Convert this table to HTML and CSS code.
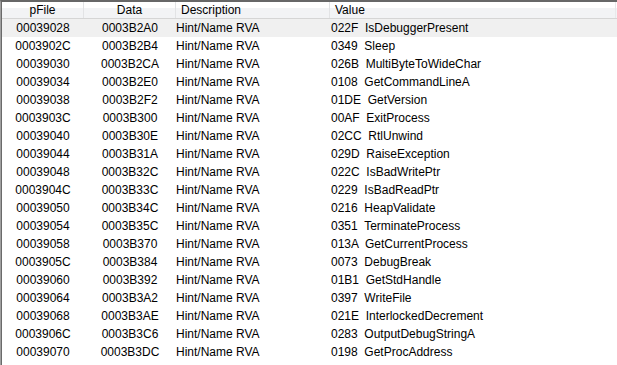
FILE: index.html
```html
<!DOCTYPE html>
<html>
<head>
<meta charset="utf-8">
<link rel="stylesheet" href="styles.css">
</head>
<body>
<div class="frame">
  <div class="list">
    <div class="header">
      <div class="hcell center">pFile</div>
      <div class="hcell center">Data</div>
      <div class="hcell">Description</div>
      <div class="hcell last">Value</div>
    </div>
    <div class="row hover"><div class="cell center">00039028</div><div class="cell center">0003B2A0</div><div class="cell">Hint/Name RVA</div><div class="cell val">022F  IsDebuggerPresent</div></div>
    <div class="row"><div class="cell center">0003902C</div><div class="cell center">0003B2B4</div><div class="cell">Hint/Name RVA</div><div class="cell val">0349  Sleep</div></div>
    <div class="row"><div class="cell center">00039030</div><div class="cell center">0003B2CA</div><div class="cell">Hint/Name RVA</div><div class="cell val">026B  MultiByteToWideChar</div></div>
    <div class="row"><div class="cell center">00039034</div><div class="cell center">0003B2E0</div><div class="cell">Hint/Name RVA</div><div class="cell val">0108  GetCommandLineA</div></div>
    <div class="row"><div class="cell center">00039038</div><div class="cell center">0003B2F2</div><div class="cell">Hint/Name RVA</div><div class="cell val">01DE  GetVersion</div></div>
    <div class="row"><div class="cell center">0003903C</div><div class="cell center">0003B300</div><div class="cell">Hint/Name RVA</div><div class="cell val">00AF  ExitProcess</div></div>
    <div class="row"><div class="cell center">00039040</div><div class="cell center">0003B30E</div><div class="cell">Hint/Name RVA</div><div class="cell val">02CC  RtlUnwind</div></div>
    <div class="row"><div class="cell center">00039044</div><div class="cell center">0003B31A</div><div class="cell">Hint/Name RVA</div><div class="cell val">029D  RaiseException</div></div>
    <div class="row"><div class="cell center">00039048</div><div class="cell center">0003B32C</div><div class="cell">Hint/Name RVA</div><div class="cell val">022C  IsBadWritePtr</div></div>
    <div class="row"><div class="cell center">0003904C</div><div class="cell center">0003B33C</div><div class="cell">Hint/Name RVA</div><div class="cell val">0229  IsBadReadPtr</div></div>
    <div class="row"><div class="cell center">00039050</div><div class="cell center">0003B34C</div><div class="cell">Hint/Name RVA</div><div class="cell val">0216  HeapValidate</div></div>
    <div class="row"><div class="cell center">00039054</div><div class="cell center">0003B35C</div><div class="cell">Hint/Name RVA</div><div class="cell val">0351  TerminateProcess</div></div>
    <div class="row"><div class="cell center">00039058</div><div class="cell center">0003B370</div><div class="cell">Hint/Name RVA</div><div class="cell val">013A  GetCurrentProcess</div></div>
    <div class="row"><div class="cell center">0003905C</div><div class="cell center">0003B384</div><div class="cell">Hint/Name RVA</div><div class="cell val">0073  DebugBreak</div></div>
    <div class="row"><div class="cell center">00039060</div><div class="cell center">0003B392</div><div class="cell">Hint/Name RVA</div><div class="cell val">01B1  GetStdHandle</div></div>
    <div class="row"><div class="cell center">00039064</div><div class="cell center">0003B3A2</div><div class="cell">Hint/Name RVA</div><div class="cell val">0397  WriteFile</div></div>
    <div class="row"><div class="cell center">00039068</div><div class="cell center">0003B3AE</div><div class="cell">Hint/Name RVA</div><div class="cell val">021E  InterlockedDecrement</div></div>
    <div class="row"><div class="cell center">0003906C</div><div class="cell center">0003B3C6</div><div class="cell">Hint/Name RVA</div><div class="cell val">0283  OutputDebugStringA</div></div>
    <div class="row"><div class="cell center">00039070</div><div class="cell center">0003B3DC</div><div class="cell">Hint/Name RVA</div><div class="cell val">0198  GetProcAddress</div></div>
  </div>
</div>
</body>
</html>
```

FILE: styles.css
```css
html, body {
  margin: 0;
  padding: 0;
  background: #ffffff;
}

body {
  font-family: "Liberation Sans", Arial, sans-serif;
  font-size: 12px;
  color: #000000;
  width: 617px;
  height: 365px;
  overflow: hidden;
}

.frame {
  height: 365px;
  border-top: 2px solid #676767;
  border-left: 1px solid #a0a0a0;
  box-sizing: border-box;
}

.list {
  height: 100%;
  border-left: 1px solid #6a6a6a;
}

.header,
.row {
  display: grid;
  grid-template-columns: 82px 92px 154px 1fr;
}

.header {
  height: 16px;
  line-height: 16px;
  border-bottom: 1px solid #d5d5d5;
  background: linear-gradient(#ffffff 0, #ffffff 6px, #f2f3f5 6px, #f2f3f5 100%);
}

.hcell {
  padding-left: 5px;
  border-right: 1px solid #e2e3e5;
  white-space: nowrap;
  overflow: hidden;
}

.hcell.center {
  padding-left: 0;
  text-align: center;
}

.hcell.last {
  border-right: 1px solid #e8e9eb;
  margin-right: 1px;
}

.row {
  height: 18px;
  line-height: 18px;
}

.row.hover {
  background: #f0f0f0;
}

.cell {
  white-space: pre;
  overflow: hidden;
}

.cell.center {
  text-align: center;
}

.cell.val {
  padding-left: 1px;
}
```
